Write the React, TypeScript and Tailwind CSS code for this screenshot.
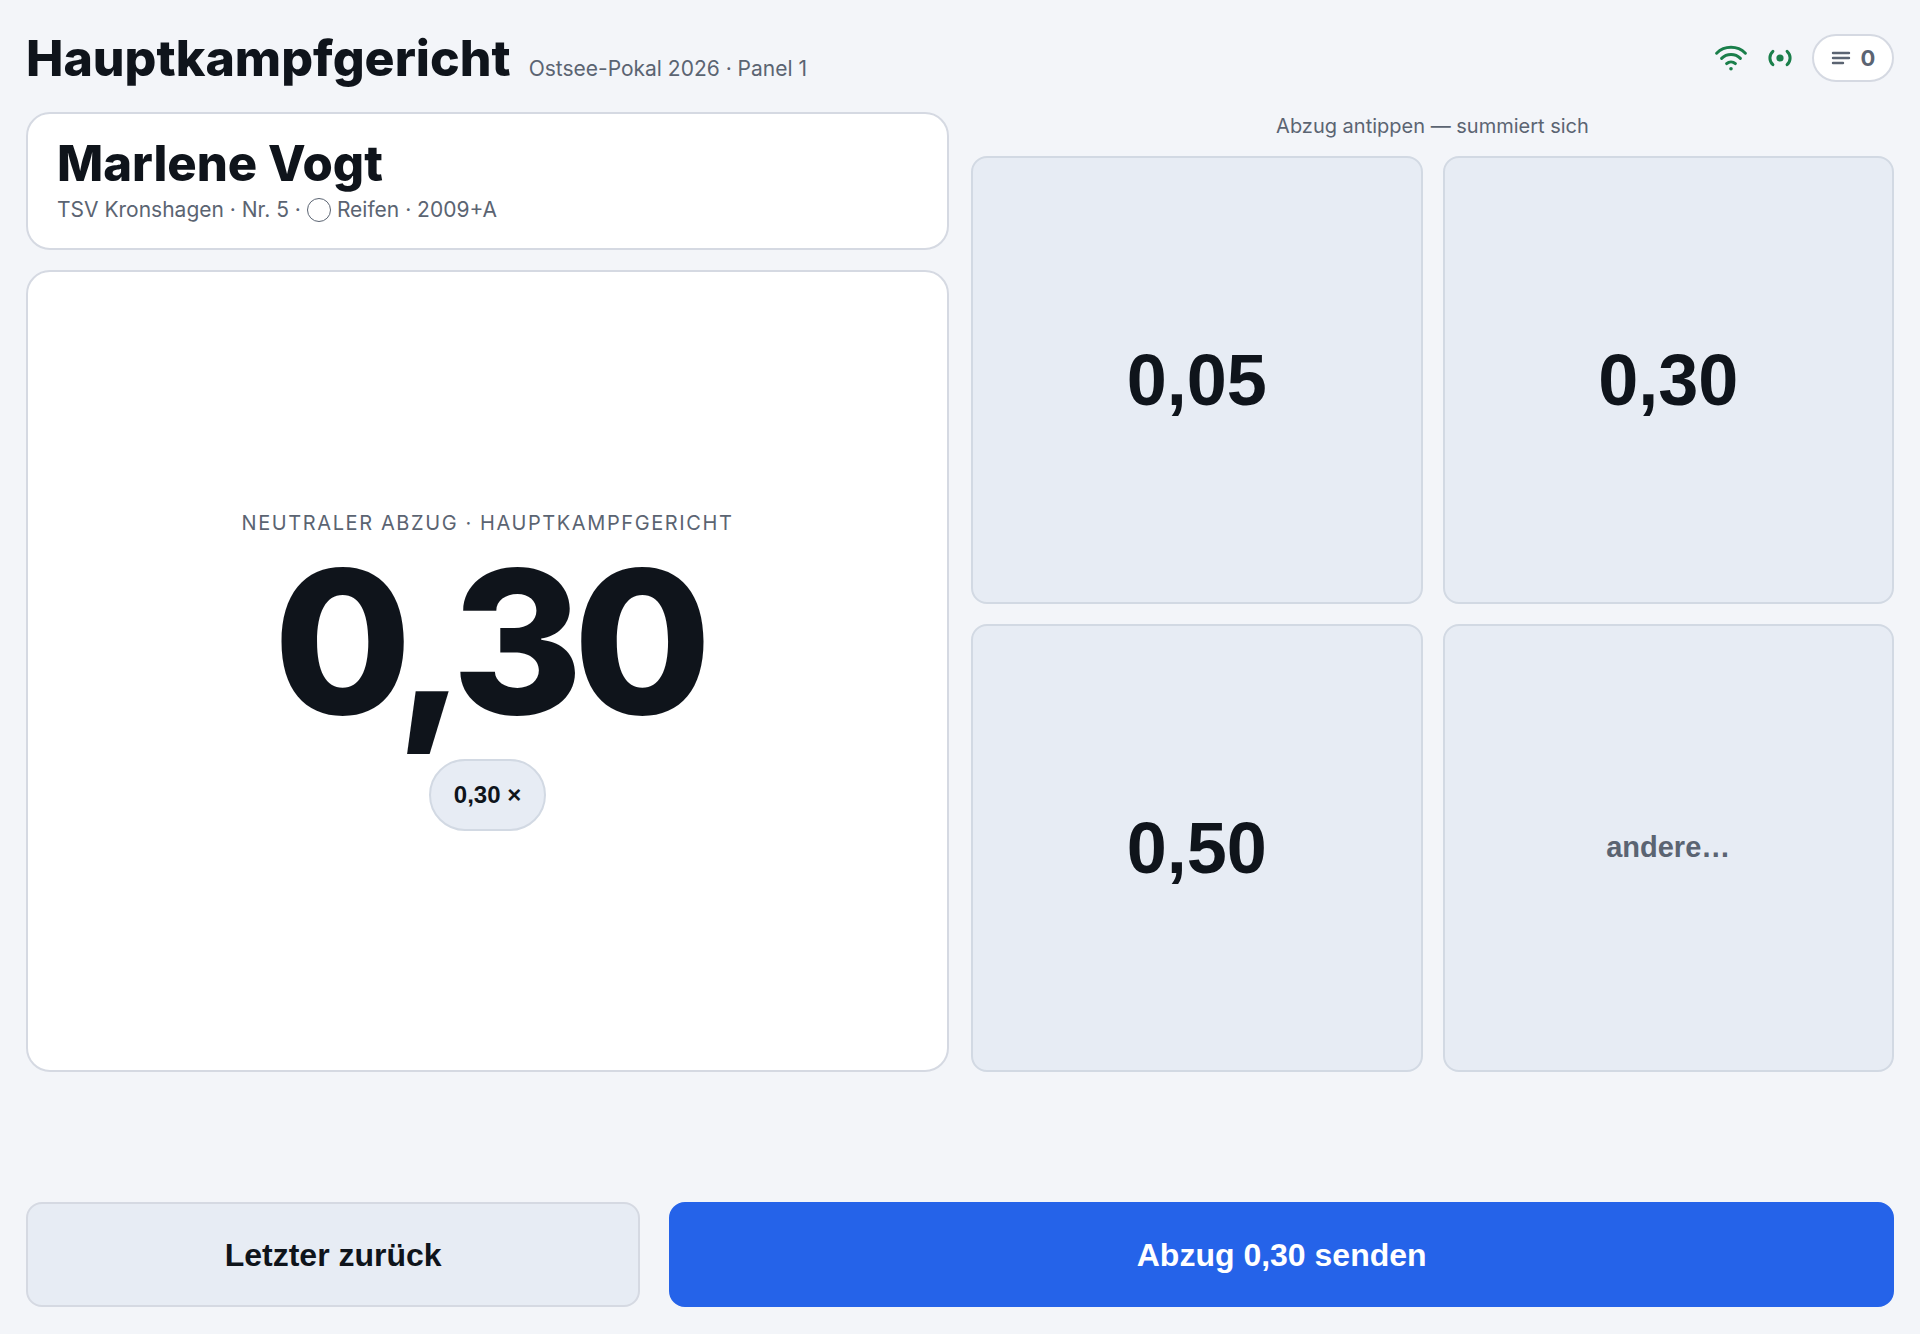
import { useState } from "react";

const deductions = [
  { label: "0,05", value: 5 },
  { label: "0,30", value: 30 },
  { label: "0,50", value: 50 },
];

const format = (value: number) => (value / 100).toFixed(2).replace(".", ",");

const WifiIcon = () => (
  <svg
    width="34"
    height="26"
    viewBox="0 0 34 26"
    fill="none"
    stroke="currentColor"
    strokeWidth="3"
    strokeLinecap="round"
    role="img"
    aria-label="WLAN verbunden"
  >
    <path d="M2.6 8.2a20.5 20.5 0 0 1 28.8 0" />
    <path d="M7.6 13.4a13.2 13.2 0 0 1 18.8 0" />
    <path d="M12.6 18.6a6.5 6.5 0 0 1 8.8 0" />
    <circle cx="17" cy="23.7" r="1.8" fill="currentColor" stroke="none" />
  </svg>
);

const LiveIcon = () => (
  <svg
    width="24"
    height="18"
    viewBox="0 0 24 18"
    fill="none"
    stroke="currentColor"
    strokeWidth="3"
    strokeLinecap="round"
    role="img"
    aria-label="Live"
  >
    <path d="M4.9 2.3a9 9 0 0 0 0 13.4" />
    <path d="M19.1 2.3a9 9 0 0 1 0 13.4" />
    <circle cx="12" cy="9" r="3.6" fill="currentColor" stroke="none" />
  </svg>
);

const QueueIcon = () => (
  <svg
    width="20"
    height="16"
    viewBox="0 0 20 16"
    fill="none"
    stroke="currentColor"
    strokeWidth="2.4"
    strokeLinecap="round"
    aria-hidden="true"
  >
    <path d="M2 3h16M2 8h16M2 13h10" />
  </svg>
);

const Header = () => (
  <header className="flex items-center justify-between">
    <div className="flex items-baseline gap-[18px]">
      <h1 className="text-[50px] leading-[60px] font-extrabold">Hauptkampfgericht</h1>
      <p className="text-[21px] text-[#5b6472]">Ostsee-Pokal 2026 · Panel 1</p>
    </div>
    <div className="flex items-center gap-5 text-[#1a7f4b]">
      <WifiIcon />
      <LiveIcon />
      <button
        type="button"
        aria-label="Warteschlange"
        className="flex h-12 w-[82px] cursor-pointer items-center justify-center gap-[10px] rounded-full border-2 border-[#d5d9e2] bg-white text-[22px] font-bold text-[#5b6472]"
      >
        <QueueIcon />
        0
      </button>
    </div>
  </header>
);

type TTileProps = {
  label: string;
  onClick: () => void;
};

const Tile = ({ label, onClick }: TTileProps) => (
  <button
    type="button"
    onClick={onClick}
    className="cursor-pointer rounded-2xl border-2 border-[#d2d9e3] bg-[#e7ecf4] font-[Liberation_Sans,Arial,sans-serif] text-[72px] font-bold"
  >
    {label}
  </button>
);

export default function App() {
  const [items, setItems] = useState<number[]>([30]);
  const total = format(items.reduce((sum, item) => sum + item, 0));

  return (
    <div className="flex min-h-screen flex-col bg-[#f3f5f9] px-[26px] pt-7 pb-[27px] font-[Inter,sans-serif] text-[#0f141b]">
      <Header />

      <main className="mt-6 grid flex-1 grid-cols-2 gap-[22px]">
        <div className="flex flex-col gap-5">
          <section className="rounded-3xl border-2 border-[#d5d9e2] bg-white px-[29px] pt-[22px] pb-5">
            <h2 className="text-[49px] leading-[56px] font-extrabold">Marlene Vogt</h2>
            <p className="flex items-center gap-[6px] text-[21px] leading-9 text-[#5b6472]">
              TSV Kronshagen · Nr. 5 ·
              <span className="size-6 rounded-full border border-current" />
              Reifen · 2009+A
            </p>
          </section>

          <section className="flex flex-1 flex-col items-center justify-center rounded-3xl border-2 border-[#d5d9e2] bg-white pb-1">
            <p className="mb-1 text-[20px] leading-8 tracking-[0.08em] text-[#5b6472] uppercase">
              Neutraler Abzug · Hauptkampfgericht
            </p>
            <output className="text-[200px] leading-[196px] font-extrabold tracking-tighter">{total}</output>
            <div className="mt-5 flex gap-3">
              {items.map((item, index) => (
                <button
                  key={index}
                  type="button"
                  onClick={() => setItems(items.filter((_, i) => i !== index))}
                  className="h-[72px] cursor-pointer rounded-full border-2 border-[#d2d9e3] bg-[#e7ecf4] px-[23px] font-[Liberation_Sans,Arial,sans-serif] text-2xl font-bold"
                >
                  {format(item)} ×
                </button>
              ))}
            </div>
          </section>
        </div>

        <div className="flex flex-col gap-4">
          <p className="text-center text-[20px] leading-7 text-[#5b6472]">Abzug antippen — summiert sich</p>
          <div className="grid flex-1 grid-cols-2 grid-rows-2 gap-5">
            {deductions.map((deduction) => (
              <Tile
                key={deduction.label}
                label={deduction.label}
                onClick={() => setItems([...items, deduction.value])}
              />
            ))}
            <button
              type="button"
              className="cursor-pointer rounded-2xl border-2 border-[#d2d9e3] bg-[#e7ecf4] font-[Liberation_Sans,Arial,sans-serif] text-[29px] font-bold text-[#5b6472]"
            >
              andere…
            </button>
          </div>
        </div>
      </main>

      <footer className="mt-[130px] flex gap-[29px] font-[Liberation_Sans,Arial,sans-serif] text-[32px] font-bold">
        <button
          type="button"
          onClick={() => setItems(items.slice(0, -1))}
          className="h-[105px] flex-1 cursor-pointer rounded-2xl border-2 border-[#d5d9e2] bg-[#e7ecf4]"
        >
          Letzter zurück
        </button>
        <button
          type="button"
          className="flex-2 cursor-pointer rounded-2xl border-2 border-[#2563e9] bg-[#2563e9] text-white"
        >
          Abzug {total} senden
        </button>
      </footer>
    </div>
  );
}
